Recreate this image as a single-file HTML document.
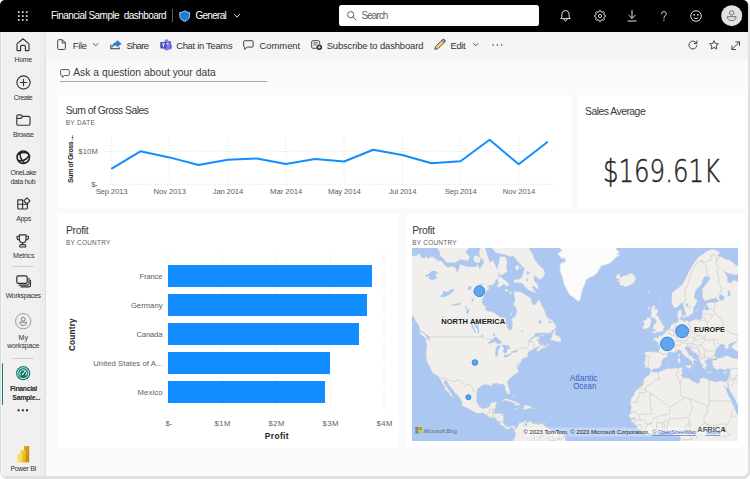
<!DOCTYPE html>
<html lang="en"><head><meta charset="utf-8"><title>Financial Sample dashboard - Power BI</title>
<style>
*{box-sizing:border-box;margin:0;padding:0}
html,body{width:750px;height:479px;overflow:hidden;background:#fff}
body{font-family:"Liberation Sans",sans-serif;color:#252423;position:relative}
.abs{position:absolute}
.ic{position:absolute;overflow:visible}
.t{position:absolute;white-space:pre;line-height:1;display:block}
#shadow{position:absolute;left:0;top:0;width:750px;height:479px;border-radius:7px;background:#dfe0e3}
#app{position:absolute;left:0;top:0;width:748px;height:475.8px;border-radius:5px;overflow:hidden;background:#fafafa}
#stage{position:absolute;left:0;top:0;width:750px;height:479px}
#top{position:absolute;left:0;top:0;width:750px;height:31.7px;background:#000}
#searchbox{position:absolute;left:338.6px;top:5.4px;width:200.3px;height:20.8px;background:#fff;border-radius:2.5px}
#nav{position:absolute;left:0;top:31.7px;width:46px;height:447.3px;background:linear-gradient(90deg,#d9dadc 0,#d9dadc .8px,#f6f6f6 1px,#f5f5f5 2.2px,#f0f0f0 2.8px,#f0f0f0 80%,#ebebeb 100%);border-right:1px solid #e0e0e0}
#toolbar{position:absolute;left:46px;top:31.7px;width:704px;height:27px;background:#f5f5f5}
#qa{position:absolute;left:60.3px;top:62px;width:206.5px;height:19.6px;border-bottom:1px solid #a8a6a4}
.card{position:absolute;background:#fff}
#c1{left:59.3px;top:94.5px;width:512.5px;height:113.2px}
#c2{left:578.7px;top:94.5px;width:166.3px;height:113.2px}
#c3{left:59.3px;top:214.4px;width:339.8px;height:233.8px}
#c4{left:405.5px;top:214.4px;width:339.5px;height:233.8px}
.bar{position:absolute;background:#118dff}
.rot{transform-origin:0 0;transform:rotate(-90deg)}
#big{position:absolute;white-space:pre;color:#252423;line-height:1}
#map{position:absolute;left:6.5px;top:34.0px;width:326px;height:192.2px;overflow:hidden;background:#a9c8ee}
</style></head><body>
<div id="shadow"></div>
<div id="app"><div id="stage">
<header id="top">
<svg class="ic" style="left:0.00px;top:0.00px" width="46.00" height="32.00" viewBox="0 0 46 32"><rect x="17.9" y="11.2" width="1.7" height="1.7" fill="#e6e6e6"/><rect x="17.9" y="15.2" width="1.7" height="1.7" fill="#e6e6e6"/><rect x="17.9" y="19.1" width="1.7" height="1.7" fill="#e6e6e6"/><rect x="21.9" y="11.2" width="1.7" height="1.7" fill="#e6e6e6"/><rect x="21.9" y="15.2" width="1.7" height="1.7" fill="#e6e6e6"/><rect x="21.9" y="19.1" width="1.7" height="1.7" fill="#e6e6e6"/><rect x="25.9" y="11.2" width="1.7" height="1.7" fill="#e6e6e6"/><rect x="25.9" y="15.2" width="1.7" height="1.7" fill="#e6e6e6"/><rect x="25.9" y="19.1" width="1.7" height="1.7" fill="#e6e6e6"/></svg>
<div class="abs" style="left:172px;top:9px;width:1px;height:13px;background:#5a5a5a"></div>
<svg class="ic" style="left:179.00px;top:10.00px" width="11.40" height="12.00" viewBox="0 0 11.4 12"><path d="M5.7 .7 C7.2 1.9 8.7 2.4 10.6 2.5 V5.6 C10.6 8.5 8.6 10.4 5.7 11.4 C2.8 10.4 .8 8.5 .8 5.6 V2.5 C2.7 2.4 4.2 1.9 5.7 .7Z" fill="#1b7cd6" stroke="#a9d3f5" stroke-width="1"/></svg>
<svg class="ic" style="left:234.20px;top:14.40px" width="6.00" height="4.20" viewBox="0 0 6 4.2"><path d="M.4 .5 L3 3.2 L5.6 .5" fill="none" stroke="#e6e6e6" stroke-width="1" stroke-linecap="round" stroke-linejoin="round"/></svg>
<span class="t" style="left:50.90px;top:11.04px;font-size:10px;color:#ffffff;letter-spacing:-0.528px;">Financial Sample  dashboard</span>
<span class="t" style="left:195.40px;top:11.04px;font-size:10px;color:#ffffff;letter-spacing:-0.696px;">General</span>
<div id="searchbox"></div>
<svg class="ic" style="left:347.00px;top:11.20px" width="9.40" height="9.40" viewBox="0 0 9.4 9.4"><circle cx="3.7" cy="3.7" r="3.1" fill="none" stroke="#605e5c" stroke-width="1"/><path d="M6 6 L8.9 8.9" stroke="#605e5c" stroke-width="1" stroke-linecap="round"/></svg>
<svg class="ic" style="left:559.50px;top:10.00px" width="11.00" height="11.60" viewBox="0 0 11 11.6"><path d="M5.5 .6 C3.2 .6 1.9 2.3 1.9 4.4 V6.8 L.8 8.6 H10.2 L9.1 6.8 V4.4 C9.1 2.3 7.8 .6 5.5 .6Z" fill="none" stroke="#e6e6e6" stroke-width="1" stroke-linejoin="round"/><path d="M4.1 9 C4.1 10.2 4.7 10.9 5.5 10.9 C6.3 10.9 6.9 10.2 6.9 9" fill="none" stroke="#e6e6e6" stroke-width="1"/></svg>
<svg class="ic" style="left:593.50px;top:9.50px" width="12.00" height="12.00" viewBox="0 0 12 12"><path d="M11.47 5.46 L11.47 6.54 L10.02 7.22 L9.70 7.98 L10.25 9.49 L9.49 10.25 L7.98 9.70 L7.22 10.02 L6.54 11.47 L5.46 11.47 L4.78 10.02 L4.02 9.70 L2.51 10.25 L1.75 9.49 L2.30 7.98 L1.98 7.22 L0.53 6.54 L0.53 5.46 L1.98 4.78 L2.30 4.02 L1.75 2.51 L2.51 1.75 L4.02 2.30 L4.78 1.98 L5.46 0.53 L6.54 0.53 L7.22 1.98 L7.98 2.30 L9.49 1.75 L10.25 2.51 L9.70 4.02 L10.02 4.78Z" fill="none" stroke="#e6e6e6" stroke-width="1" stroke-linejoin="round"/><circle cx="6" cy="6" r="1.6" fill="none" stroke="#e6e6e6" stroke-width="1"/></svg>
<svg class="ic" style="left:626.50px;top:10.30px" width="10.00" height="12.00" viewBox="0 0 10 12"><path d="M5 .5 V8.2 M1.9 5.3 L5 8.4 L8.1 5.3 M1 11 H9" fill="none" stroke="#e6e6e6" stroke-width="1" stroke-linecap="round" stroke-linejoin="round"/></svg>
<svg class="ic" style="left:659.50px;top:11.20px" width="8.00" height="10.40" viewBox="0 0 8 10.4"><path d="M1.5 2.9 C1.5 1.4 2.6 .6 3.9 .6 C5.2 .6 6.3 1.5 6.3 2.8 C6.3 4.6 3.9 4.8 3.9 6.9" fill="none" stroke="#e6e6e6" stroke-width="1" stroke-linecap="round"/><circle cx="3.9" cy="9.1" r=".7" fill="#e6e6e6"/></svg>
<svg class="ic" style="left:689.70px;top:10.00px" width="12.00" height="12.00" viewBox="0 0 12 12"><circle cx="6" cy="6" r="5.3" fill="none" stroke="#e6e6e6" stroke-width="1"/><rect x="3.5" y="4" width="1.4" height="1.6" fill="#e6e6e6"/><rect x="7.1" y="4" width="1.4" height="1.6" fill="#e6e6e6"/><path d="M4 7.9 C4.8 8.8 7.2 8.8 8 7.9" fill="none" stroke="#e6e6e6" stroke-width="1" stroke-linecap="round"/></svg>
<svg class="ic" style="left:721.30px;top:4.60px" width="21.40" height="21.40" viewBox="0 0 21.4 21.4"><circle cx="10.7" cy="10.7" r="10.5" fill="#e1e1e1"/><circle cx="10.7" cy="7.9" r="2.2" fill="none" stroke="#707070" stroke-width="1"/><path d="M6.3 11.7 H15.1 C15.1 14.2 13.4 15.6 10.7 15.6 C8 15.6 6.3 14.2 6.3 11.7Z" fill="none" stroke="#707070" stroke-width="1" stroke-linejoin="round"/></svg>
<span class="t" style="left:361.60px;top:11.23px;font-size:10px;color:#605e5c;letter-spacing:-1.017px;">Search</span>
</header>
<nav id="navitems" aria-label="Navigation pane"><div id="nav"></div>
<svg class="ic" style="left:16.00px;top:38.20px" width="14.00" height="13.60" viewBox="0 0 14 13.6"><path d="M7 .8 L1 5.9 V12 C1 12.4 1.3 12.7 1.7 12.7 H4.6 V8.6 C4.6 7.9 5.1 7.4 5.8 7.4 H8.2 C8.9 7.4 9.4 7.9 9.4 8.6 V12.7 H12.3 C12.7 12.7 13 12.4 13 12 V5.9Z" fill="none" stroke="#333333" stroke-width="1.15" stroke-linejoin="round"/></svg>
<svg class="ic" style="left:15.50px;top:74.80px" width="15.00" height="15.00" viewBox="0 0 15 15"><circle cx="7.5" cy="7.5" r="6.6" fill="none" stroke="#333333" stroke-width="1.15"/><path d="M7.5 4.3 V10.7 M4.3 7.5 H10.7" stroke="#333333" stroke-width="1.15" stroke-linecap="round"/></svg>
<svg class="ic" style="left:15.60px;top:113.60px" width="15.00" height="12.00" viewBox="0 0 15 12"><path d="M.8 2.2 C.8 1.4 1.4 .8 2.2 .8 H5 L6.6 2.4 H12.6 C13.4 2.4 14 3 14 3.8 V9.8 C14 10.6 13.4 11.2 12.6 11.2 H2.2 C1.4 11.2 .8 10.6 .8 9.8Z M.9 4.4 H4.9 L6.6 2.5" fill="none" stroke="#333333" stroke-width="1.15" stroke-linejoin="round"/></svg>
<svg class="ic" style="left:15.80px;top:150.00px" width="14.60" height="14.40" viewBox="0 0 14.6 14.4"><circle cx="7.3" cy="7.2" r="6.2" fill="none" stroke="#222" stroke-width="1.6"/><path d="M2.2 4.6 C4.5 2.2 9 1.6 12 3.6 M4.8 1.9 C3.2 5.2 4.5 9.8 8.6 12.8 M13 5.4 C11.2 9.2 7.6 11.4 2.4 10.4" fill="none" stroke="#222" stroke-width="1.5"/></svg>
<svg class="ic" style="left:16.60px;top:196.60px" width="14.00" height="13.00" viewBox="0 0 14 13"><path d="M.8 2.8 H5.6 V12 H1.8 C1.2 12 .8 11.6 .8 11 Z M5.6 7.2 H10.4 V11 C10.4 11.6 10 12 9.4 12 H5.6 M.8 7.2 H5.6" fill="none" stroke="#333333" stroke-width="1.15" stroke-linejoin="round"/><path d="M9.9 .8 L13 3.9 L9.9 7 L6.8 3.9Z" fill="none" stroke="#333333" stroke-width="1.15" stroke-linejoin="round"/></svg>
<svg class="ic" style="left:16.40px;top:234.00px" width="13.40" height="14.00" viewBox="0 0 13.4 14"><path d="M3.4 .8 H10 V5.2 C10 7.2 8.6 8.6 6.7 8.6 C4.8 8.6 3.4 7.2 3.4 5.2Z M3.4 2.2 H1 V3.4 C1 4.8 2 5.8 3.5 5.9 M10 2.2 H12.4 V3.4 C12.4 4.8 11.4 5.8 9.9 5.9 M6.7 8.6 V10.6 M4.9 10.6 H8.5 C9.1 10.6 9.6 11.1 9.6 11.7 V13 H3.8 V11.7 C3.8 11.1 4.3 10.6 4.9 10.6Z" fill="none" stroke="#333333" stroke-width="1.15" stroke-linejoin="round"/></svg>
<div class="abs" style="left:12px;top:266px;width:22px;height:1px;background:#d1d1d1"></div>
<svg class="ic" style="left:15.60px;top:274.60px" width="15.00" height="12.60" viewBox="0 0 15 12.6"><rect x=".8" y=".8" width="10.4" height="7.6" rx="1.6" fill="none" stroke="#2b2b2b" stroke-width="1.2"/><path d="M3 10.1 H11.4 C12.3 10.1 13 9.4 13 8.5 V3.2" fill="none" stroke="#2b2b2b" stroke-width="1.1" stroke-linecap="round"/><path d="M5 11.9 H12.8 C13.8 11.9 14.5 11.2 14.5 10.2 V5.2" fill="none" stroke="#2b2b2b" stroke-width="1.1" stroke-linecap="round"/></svg>
<svg class="ic" style="left:14.80px;top:312.80px" width="16.40" height="16.40" viewBox="0 0 16.4 16.4"><circle cx="8.2" cy="8.2" r="7.7" fill="#ededed" stroke="#8a8a8a" stroke-width=".8"/><circle cx="8.2" cy="6.2" r="1.9" fill="none" stroke="#777" stroke-width=".9"/><path d="M4.9 9.2 H11.5 C11.5 11.3 10.2 12.4 8.2 12.4 C6.2 12.4 4.9 11.3 4.9 9.2Z" fill="none" stroke="#777" stroke-width=".9" stroke-linejoin="round"/></svg>
<div class="abs" style="left:12px;top:358px;width:22px;height:1px;background:#d1d1d1"></div>
<div class="abs" style="left:1.6px;top:363px;width:1.6px;height:42px;background:#0f7b6c;border-radius:1px"></div>
<svg class="ic" style="left:15.80px;top:366.40px" width="14.40" height="14.40" viewBox="0 0 14.4 14.4"><circle cx="7.2" cy="7.2" r="7.1" fill="#0f7b6c"/><circle cx="7.2" cy="7.2" r="5.5" fill="none" stroke="#fff" stroke-width=".85"/><path d="M4.2 9.2 A3.5 3.5 0 1 1 10.2 9.2" fill="none" stroke="#fff" stroke-width=".85" stroke-linecap="round"/><path d="M6.7 8.3 L9.2 5.2" stroke="#fff" stroke-width="1" stroke-linecap="round"/><circle cx="6.8" cy="8.2" r=".8" fill="#fff"/></svg>
<svg class="ic" style="left:17.20px;top:408.90px" width="12.00" height="2.40" viewBox="0 0 12 2.4"><rect x="0.6" y=".2" width="2" height="2" rx=".5" fill="#222"/><rect x="4.8" y=".2" width="2" height="2" rx=".5" fill="#222"/><rect x="9" y=".2" width="2" height="2" rx=".5" fill="#222"/></svg>
<svg class="ic" style="left:17.00px;top:446.00px" width="12.20" height="16.20" viewBox="0 0 12.2 16.2"><defs><linearGradient id="pa" x1="0" y1="0" x2="1" y2="1"><stop offset="0" stop-color="#e6ad10"/><stop offset="1" stop-color="#c87e0e"/></linearGradient><linearGradient id="pb" x1="0" y1="0" x2="1" y2="1"><stop offset="0" stop-color="#f6d751"/><stop offset="1" stop-color="#e6ad10"/></linearGradient><linearGradient id="pc" x1="0" y1="0" x2="1" y2="1"><stop offset="0" stop-color="#f9e589"/><stop offset="1" stop-color="#f6d751"/></linearGradient></defs><rect x="7" y="0" width="5.2" height="16.2" rx=".6" fill="url(#pa)"/><path d="M3.5 4.6 C3.5 4.3 3.8 4 4.1 4 H8 C8.3 4 8.6 4.3 8.6 4.6 V16.2 H3.5Z" fill="url(#pb)"/><path d="M0 8.7 C0 8.4 .3 8.1 .6 8.1 H4.5 C4.8 8.1 5.1 8.4 5.1 8.7 V16.2 H.6 C.3 16.2 0 15.9 0 15.6Z" fill="url(#pc)"/></svg>
<span class="t" style="left:14.60px;top:56.07px;font-size:7.0px;color:#333333;letter-spacing:-0.362px;">Home</span>
<span class="t" style="left:13.70px;top:93.77px;font-size:7.0px;color:#333333;letter-spacing:-0.403px;">Create</span>
<span class="t" style="left:13.00px;top:131.07px;font-size:7.0px;color:#333333;letter-spacing:-0.489px;">Browse</span>
<span class="t" style="left:10.40px;top:169.07px;font-size:7.0px;color:#333333;letter-spacing:-0.404px;">OneLake</span>
<span class="t" style="left:10.40px;top:178.07px;font-size:7.0px;color:#333333;letter-spacing:-0.293px;">data hub</span>
<span class="t" style="left:16.20px;top:214.67px;font-size:7.0px;color:#333333;letter-spacing:-0.323px;">Apps</span>
<span class="t" style="left:13.00px;top:251.77px;font-size:7.0px;color:#333333;letter-spacing:-0.194px;">Metrics</span>
<span class="t" style="left:5.70px;top:291.77px;font-size:7.0px;color:#333333;letter-spacing:-0.332px;">Workspaces</span>
<span class="t" style="left:18.50px;top:334.07px;font-size:7.0px;color:#333333;letter-spacing:0.056px;">My</span>
<span class="t" style="left:7.30px;top:342.37px;font-size:7.0px;color:#333333;letter-spacing:-0.171px;">workspace</span>
<span class="t" style="left:10.00px;top:385.07px;font-size:7.0px;font-weight:700;color:#242424;letter-spacing:-0.405px;">Financial</span>
<span class="t" style="left:12.30px;top:394.37px;font-size:7.0px;font-weight:700;color:#242424;letter-spacing:-0.329px;">Sample...</span>
<span class="t" style="left:10.50px;top:465.07px;font-size:7.0px;color:#333333;letter-spacing:-0.358px;">Power BI</span>
</nav>
<div id="tbitems" role="toolbar"><div id="toolbar"></div>
<svg class="ic" style="left:57.20px;top:39.40px" width="9.20" height="11.20" viewBox="0 0 9.2 11.2"><path d="M1.6 .7 H5.3 L8.4 3.8 V9.6 C8.4 10.1 8 10.5 7.5 10.5 H1.6 C1.1 10.5 .7 10.1 .7 9.6 V1.6 C.7 1.1 1.1 .7 1.6 .7Z M5.2 .8 V3.9 H8.3" fill="none" stroke="#424242" stroke-width="1" stroke-linejoin="round"/></svg>
<svg class="ic" style="left:92.60px;top:43.40px" width="5.40" height="3.90" viewBox="0 0 5.4 3.9"><path d="M.4 .5 L2.7 2.9 L5 .5" fill="none" stroke="#424242" stroke-width="0.9" stroke-linecap="round" stroke-linejoin="round"/></svg>
<svg class="ic" style="left:109.50px;top:39.80px" width="11.80" height="9.80" viewBox="0 0 11.8 9.8"><path d="M.9 4.6 V8.7 H9.2 V7.2" fill="none" stroke="#3b3a39" stroke-width="1.1"/><path d="M6.9 .4 L11.3 3.7 L6.9 7 V5 C4.7 4.9 3.2 5.7 2.2 7.4 C2.4 4.3 4 2.5 6.9 2.3Z" fill="#2f7fd3" stroke="#1e5fa8" stroke-width=".5" stroke-linejoin="round"/></svg>
<svg class="ic" style="left:159.50px;top:39.00px" width="11.80" height="11.80" viewBox="0 0 11.8 11.8"><circle cx="9.6" cy="3.6" r="1.5" fill="#5059c9"/><circle cx="6.6" cy="2.3" r="2.1" fill="#7b83eb"/><path d="M8.3 5.2 H11 C11.4 5.2 11.7 5.5 11.7 5.9 V8.4 C11.7 9.6 10.8 10.3 9.8 10.3 C9 10.3 8.3 9.8 8.3 9Z" fill="#5059c9"/><path d="M3.6 5.2 H9.2 C9.6 5.2 9.9 5.5 9.9 5.9 V8.6 C9.9 10.3 8.5 11.6 6.8 11.6 C5 11.6 3.6 10.3 3.6 8.6Z" fill="#7b83eb"/><rect x=".2" y="3.1" width="6.4" height="6.4" rx=".7" fill="#4b53bc"/><path d="M1.9 4.9 H4.9 M3.4 4.9 V8" stroke="#fff" stroke-width=".9" fill="none"/></svg>
<svg class="ic" style="left:243.30px;top:39.60px" width="10.80" height="10.20" viewBox="0 0 10.8 10.2"><path d="M1.4 .7 H9.4 C9.8 .7 10.1 1 10.1 1.4 V6.4 C10.1 6.8 9.8 7.1 9.4 7.1 H4.2 L1.7 9.4 V7.1 H1.4 C1 7.1 .7 6.8 .7 6.4 V1.4 C.7 1 1 .7 1.4 .7Z" fill="none" stroke="#424242" stroke-width="1" stroke-linejoin="round"/></svg>
<svg class="ic" style="left:310.50px;top:39.60px" width="11.80" height="10.40" viewBox="0 0 11.8 10.4"><path d="M5.6 8.3 H1.8 C1.2 8.3 .7 7.8 .7 7.2 V1.8 C.7 1.2 1.2 .7 1.8 .7 H7.6 C8.2 .7 8.7 1.2 8.7 1.8 V4.6" fill="none" stroke="#424242" stroke-width="1"/><path d="M2.5 2.9 H6.9 M2.5 4.8 H5.4" stroke="#424242" stroke-width=".9" fill="none"/><circle cx="8.3" cy="7.2" r="2.8" fill="#2b2b2b"/><path d="M8.3 5.7 V8.7 M6.8 7.2 H9.8" stroke="#fff" stroke-width=".8"/></svg>
<svg class="ic" style="left:433.60px;top:39.20px" width="11.80" height="11.20" viewBox="0 0 11.8 11.2"><path d="M.9 10.3 L1.7 7.5 L8.3 .9 C8.9 .3 9.9 .3 10.5 .9 C11.1 1.5 11.1 2.5 10.5 3.1 L3.9 9.7Z" fill="#f3d86e" stroke="#3b3a39" stroke-width=".9" stroke-linejoin="round"/><path d="M8.3 .9 C8.9 .3 9.9 .3 10.5 .9 C11.1 1.5 11.1 2.5 10.5 3.1 L10 3.6 L7.8 1.4Z" fill="#c98bd0" stroke="#3b3a39" stroke-width=".6"/></svg>
<svg class="ic" style="left:472.60px;top:43.30px" width="5.40" height="3.90" viewBox="0 0 5.4 3.9"><path d="M.4 .5 L2.7 2.9 L5 .5" fill="none" stroke="#424242" stroke-width="0.9" stroke-linecap="round" stroke-linejoin="round"/></svg>
<svg class="ic" style="left:491.50px;top:44.00px" width="11.00" height="2.00" viewBox="0 0 11 2"><circle cx="1.2" cy="1" r=".75" fill="#333"/><circle cx="5.4" cy="1" r=".75" fill="#333"/><circle cx="9.6" cy="1" r=".75" fill="#333"/></svg>
<svg class="ic" style="left:688.20px;top:40.20px" width="10.00" height="10.00" viewBox="0 0 10 10"><path d="M8.6 3.4 A4 4 0 1 0 8.9 5.6" fill="none" stroke="#424242" stroke-width="1" stroke-linecap="round"/><path d="M8.9 .9 V3.6 H6.2" fill="none" stroke="#424242" stroke-width="1" stroke-linecap="round" stroke-linejoin="round"/></svg>
<svg class="ic" style="left:709.30px;top:40.20px" width="10.00" height="10.00" viewBox="0 0 10 10"><path d="M5.00 0.70 L6.29 3.52 L9.37 3.88 L7.09 5.98 L7.70 9.02 L5.00 7.50 L2.30 9.02 L2.91 5.98 L0.63 3.88 L3.71 3.52Z" fill="none" stroke="#424242" stroke-width="1" stroke-linejoin="round"/></svg>
<svg class="ic" style="left:731.00px;top:40.50px" width="9.40" height="9.40" viewBox="0 0 9.4 9.4"><path d="M1 8.4 L8.4 1 M4.9 .9 H8.5 V4.5 M.9 4.9 V8.5 H4.5" fill="none" stroke="#424242" stroke-width="1" stroke-linecap="round" stroke-linejoin="round"/></svg>
<span class="t" style="left:72.80px;top:41.34px;font-size:9.4px;color:#323130;letter-spacing:-0.303px;">File</span>
<span class="t" style="left:126.60px;top:41.34px;font-size:9.4px;color:#323130;letter-spacing:-0.658px;">Share</span>
<span class="t" style="left:176.20px;top:41.34px;font-size:9.4px;color:#323130;letter-spacing:-0.279px;">Chat in Teams</span>
<span class="t" style="left:259.50px;top:41.34px;font-size:9.4px;color:#323130;letter-spacing:0.010px;">Comment</span>
<span class="t" style="left:326.70px;top:41.34px;font-size:9.4px;color:#323130;letter-spacing:-0.111px;">Subscribe to dashboard</span>
<span class="t" style="left:450.60px;top:41.34px;font-size:9.4px;color:#323130;letter-spacing:-0.385px;">Edit</span>
</div>
<main id="dash">
<div id="qabox"><div id="qa"></div>
<svg class="ic" style="left:60.00px;top:68.80px" width="10.20" height="9.40" viewBox="0 0 10.2 9.4"><path d="M1.5 .6 H8.4 C8.9 .6 9.3 1 9.3 1.5 V5.6 C9.3 6.1 8.9 6.5 8.4 6.5 H4.4 L2.3 8.5 V6.5 H1.5 C1 6.5 .6 6.1 .6 5.6 V1.5 C.6 1 1 .6 1.5 .6Z" fill="none" stroke="#4a4a4a" stroke-width=".9" stroke-linejoin="round"/></svg>
<span class="t" style="left:73.20px;top:68.48px;font-size:10.3px;color:#3b3a39;letter-spacing:0.022px;">Ask a question about your data</span>
</div>
<section class="card" id="c1">
<span class="t" style="left:6.40px;top:11.80px;font-size:10.4px;color:#3b3a39;letter-spacing:-0.536px;">Sum of Gross Sales</span>
<span class="t" style="left:6.40px;top:25.28px;font-size:6.4px;color:#605e5c;letter-spacing:0.372px;">BY DATE</span>
<svg class="abs" style="left:0;top:0" width="512.4" height="112.8" viewBox="0 0 512.4 112.8"><g stroke="#d2d0ce" stroke-width=".8" stroke-dasharray=".8 2.2" fill="none"><line x1="52.3" y1="41.0" x2="52.3" y2="89.5"/><line x1="110.5" y1="41.0" x2="110.5" y2="89.5"/><line x1="168.7" y1="41.0" x2="168.7" y2="89.5"/><line x1="226.9" y1="41.0" x2="226.9" y2="89.5"/><line x1="285.1" y1="41.0" x2="285.1" y2="89.5"/><line x1="343.3" y1="41.0" x2="343.3" y2="89.5"/><line x1="401.5" y1="41.0" x2="401.5" y2="89.5"/><line x1="459.7" y1="41.0" x2="459.7" y2="89.5"/><line x1="44.7" y1="56.3" x2="496.7" y2="56.3"/><line x1="44.7" y1="89.4" x2="496.7" y2="89.4"/></g><polyline points="52.3,73.8 81.4,56.3 110.5,62.4 139.6,70.0 168.7,64.8 197.8,63.4 226.9,69.0 256.0,64.1 285.1,66.5 314.2,54.8 343.3,60.0 372.4,68.3 401.5,66.2 430.6,44.7 459.7,69.3 488.8,46.8" fill="none" stroke="#118dff" stroke-width="2" stroke-linejoin="round"/></svg>
<span class="t" style="left:36.35px;top:93.98px;font-size:7.7px;color:#605e5c;letter-spacing:-0.146px;">Sep 2013</span>
<span class="t" style="left:94.30px;top:93.98px;font-size:7.7px;color:#605e5c;letter-spacing:-0.075px;">Nov 2013</span>
<span class="t" style="left:153.50px;top:93.98px;font-size:7.7px;color:#605e5c;letter-spacing:-0.177px;">Jan 2014</span>
<span class="t" style="left:210.80px;top:93.98px;font-size:7.7px;color:#605e5c;letter-spacing:-0.041px;">Mar 2014</span>
<span class="t" style="left:268.60px;top:93.98px;font-size:7.7px;color:#605e5c;letter-spacing:-0.109px;">May 2014</span>
<span class="t" style="left:329.40px;top:93.98px;font-size:7.7px;color:#605e5c;letter-spacing:-0.183px;">Jul 2014</span>
<span class="t" style="left:385.55px;top:93.98px;font-size:7.7px;color:#605e5c;letter-spacing:-0.146px;">Sep 2014</span>
<span class="t" style="left:443.50px;top:93.98px;font-size:7.7px;color:#605e5c;letter-spacing:-0.075px;">Nov 2014</span>
<span class="t" style="left:19.00px;top:53.48px;font-size:7.7px;color:#605e5c;letter-spacing:0.122px;">$10M</span>
<span class="t" style="left:32.00px;top:86.08px;font-size:7.7px;color:#605e5c;letter-spacing:-0.544px;">$-</span>
<span class="t rot" style="left:7.77px;top:88.40px;font-size:7.0px;font-weight:700;letter-spacing:-0.379px;">Sum of Gross ...</span>
</section>
<section class="card" id="c2">
<span class="t" style="left:6.30px;top:12.10px;font-size:10.4px;color:#3b3a39;letter-spacing:-0.511px;">Sales Average</span>
<div id="big" style="left:24.7px;top:61.6px;font-size:31.5px;font-family:'DejaVu Sans Light','DejaVu Sans','Liberation Sans',sans-serif;font-weight:200;-webkit-text-stroke:.45px #252423;transform-origin:0 0;transform:scaleX(.775)">$169.61K</div>
</section>
<section class="card" id="c3">
<span class="t" style="left:6.70px;top:12.00px;font-size:10.4px;color:#3b3a39;letter-spacing:-0.313px;">Profit</span>
<span class="t" style="left:6.70px;top:25.28px;font-size:6.4px;color:#605e5c;letter-spacing:0.292px;">BY COUNTRY</span>
<svg class="abs" style="left:0;top:0" width="339.8" height="233.8" viewBox="0 0 339.8 233.8"><g stroke="#d2d0ce" stroke-width=".8" stroke-dasharray=".8 2.2" fill="none"><line x1="109.1" y1="40.1" x2="109.1" y2="196.6"/><line x1="163.1" y1="40.1" x2="163.1" y2="196.6"/><line x1="217.1" y1="40.1" x2="217.1" y2="196.6"/><line x1="271.1" y1="40.1" x2="271.1" y2="196.6"/><line x1="325.1" y1="40.1" x2="325.1" y2="196.6"/></g></svg>
<div class="bar" style="left:109.1px;top:50.5px;width:203.8px;height:21.9px"></div><div class="bar" style="left:109.1px;top:79.5px;width:198.5px;height:21.9px"></div><div class="bar" style="left:109.1px;top:108.5px;width:190.3px;height:21.9px"></div><div class="bar" style="left:109.1px;top:137.5px;width:161.7px;height:21.9px"></div><div class="bar" style="left:109.1px;top:166.5px;width:156.8px;height:21.9px"></div>
<span class="t" style="left:80.20px;top:58.48px;font-size:7.7px;color:#605e5c;letter-spacing:-0.188px;">France</span>
<span class="t" style="left:71.60px;top:87.48px;font-size:7.7px;color:#605e5c;">Germany</span>
<span class="t" style="left:77.20px;top:116.48px;font-size:7.7px;color:#605e5c;letter-spacing:-0.188px;">Canada</span>
<span class="t" style="left:33.90px;top:145.48px;font-size:7.7px;color:#605e5c;letter-spacing:0.067px;">United States of A...</span>
<span class="t" style="left:78.20px;top:174.48px;font-size:7.7px;color:#605e5c;letter-spacing:0.128px;">Mexico</span>
<span class="t" style="left:106.10px;top:205.98px;font-size:7.7px;color:#605e5c;letter-spacing:-0.044px;">$-</span>
<span class="t" style="left:155.15px;top:205.98px;font-size:7.7px;color:#605e5c;letter-spacing:0.466px;">$1M</span>
<span class="t" style="left:209.15px;top:205.98px;font-size:7.7px;color:#605e5c;letter-spacing:0.466px;">$2M</span>
<span class="t" style="left:263.15px;top:205.98px;font-size:7.7px;color:#605e5c;letter-spacing:0.466px;">$3M</span>
<span class="t" style="left:317.15px;top:205.98px;font-size:7.7px;color:#605e5c;letter-spacing:0.466px;">$4M</span>
<span class="t" style="left:205.50px;top:217.99px;font-size:8.4px;font-weight:700;letter-spacing:0.385px;">Profit</span>
<span class="t rot" style="left:9.76px;top:136.20px;font-size:8.2px;font-weight:700;letter-spacing:0.202px;">Country</span>
</section>
<section class="card" id="c4">
<span class="t" style="left:6.70px;top:12.00px;font-size:10.4px;color:#3b3a39;letter-spacing:-0.313px;">Profit</span>
<span class="t" style="left:6.70px;top:25.18px;font-size:6.4px;color:#605e5c;letter-spacing:0.292px;">BY COUNTRY</span>
<div id="map"><svg class="abs" style="left:0;top:0" width="326" height="192.2" viewBox="0 0 326 192.2" font-family="Liberation Sans, sans-serif"><rect width="326" height="193" fill="#abc7f2"/><path d="M-34.7 -24.6 L-34.7 8.3 L-17.6 9.4 L-10.0 12.6 L-6.2 10.4 L-2.4 9.9 L1.4 7.7 L5.2 7.2 L7.1 4.4 L9.0 8.8 L12.8 10.4 L13.7 7.2 L15.6 10.4 L20.4 8.3 L26.1 12.6 L29.8 13.1 L32.7 17.2 L35.5 19.3 L41.2 18.3 L44.1 20.3 L45.0 24.6 L46.4 21.7 L48.2 16.2 L52.6 17.8 L56.4 18.8 L60.2 18.8 L64.0 18.8 L65.9 15.7 L67.8 21.2 L69.1 17.8 L71.6 15.7 L71.0 11.5 L67.8 9.9 L66.8 4.4 L68.7 -0.9 L70.6 -4.5 L73.9 1.5 L75.4 7.2 L76.3 9.9 L78.2 14.2 L81.1 12.0 L83.0 16.2 L84.9 20.8 L85.8 17.8 L87.3 12.6 L87.7 8.3 L93.4 8.8 L95.3 13.6 L94.3 20.3 L95.7 23.2 L91.5 26.5 L88.7 27.5 L86.2 25.1 L86.8 29.8 L83.9 32.0 L82.0 36.5 L79.2 37.3 L75.0 37.7 L77.8 39.9 L75.4 42.0 L73.5 45.6 L71.6 48.8 L70.3 52.6 L70.4 56.4 L73.1 57.5 L74.2 62.8 L79.2 63.5 L83.0 65.3 L88.7 69.3 L93.8 70.0 L94.0 75.2 L95.3 79.3 L97.2 82.0 L99.7 81.4 L100.4 77.4 L100.0 73.6 L99.1 71.3 L102.9 68.7 L104.4 65.3 L104.8 61.8 L102.9 58.2 L101.0 56.4 L102.9 52.6 L102.3 48.8 L101.9 43.6 L106.7 43.6 L110.5 44.8 L113.3 46.8 L117.1 48.8 L119.2 51.1 L119.8 54.5 L120.9 56.8 L122.8 56.8 L124.7 54.2 L127.4 51.1 L129.4 56.4 L132.3 61.8 L134.2 67.0 L136.1 70.3 L139.9 72.0 L141.2 73.6 L143.7 76.8 L144.2 79.9 L141.8 81.7 L138.0 85.1 L134.2 85.3 L128.5 85.1 L123.7 85.3 L121.9 88.0 L119.0 90.3 L116.7 93.1 L115.2 94.8 L117.1 94.0 L120.0 90.6 L123.7 88.6 L127.5 88.9 L127.5 90.9 L124.7 91.7 L126.6 93.1 L127.0 95.9 L128.5 97.3 L132.3 97.8 L134.2 98.4 L135.3 94.5 L136.3 97.3 L133.2 99.5 L129.4 101.1 L125.6 104.0 L124.3 101.9 L127.0 99.2 L127.5 98.1 L124.7 99.5 L122.8 100.0 L121.9 101.1 L119.0 102.7 L116.7 103.7 L115.8 105.8 L115.4 106.8 L116.0 108.1 L117.1 108.6 L114.8 109.1 L112.4 109.9 L110.3 110.6 L113.3 110.4 L109.7 111.6 L109.3 113.6 L107.8 115.6 L106.7 114.4 L107.4 116.5 L105.9 119.9 L105.3 115.8 L104.8 119.0 L105.7 120.4 L106.7 124.1 L104.4 125.5 L102.1 127.1 L100.0 128.7 L97.2 131.2 L95.9 133.2 L95.5 135.4 L97.0 139.4 L98.0 143.0 L97.6 146.2 L96.1 146.6 L94.7 144.5 L93.0 140.9 L93.0 138.3 L91.1 136.1 L90.0 136.1 L87.9 136.7 L85.8 135.2 L83.0 135.4 L80.7 135.4 L80.3 138.1 L78.2 137.8 L75.8 137.0 L72.0 136.7 L70.1 137.6 L67.8 139.4 L65.5 141.3 L65.3 144.7 L64.6 148.9 L64.4 152.4 L65.5 155.6 L67.4 158.5 L69.7 159.9 L71.2 160.7 L74.4 159.9 L76.7 159.3 L78.0 157.5 L78.4 155.0 L82.0 154.0 L84.9 154.0 L83.9 157.1 L83.5 160.1 L82.4 161.1 L82.6 163.1 L81.4 165.2 L83.0 165.4 L86.8 165.2 L89.6 165.4 L91.9 167.0 L91.3 170.9 L91.3 173.8 L91.9 175.8 L93.4 177.7 L95.3 178.8 L98.1 178.3 L100.0 177.7 L101.9 178.1 L103.3 179.4 L104.2 180.6 L105.7 178.1 L106.7 175.8 L108.0 174.6 L110.5 174.2 L113.3 172.5 L114.6 172.9 L113.9 174.8 L117.1 173.8 L117.1 172.5 L119.0 174.0 L120.5 175.6 L123.7 175.6 L126.6 176.5 L128.5 175.8 L132.3 175.4 L131.3 176.7 L134.2 178.7 L135.1 179.6 L137.0 180.6 L139.3 182.7 L141.8 184.4 L145.6 184.6 L148.4 185.2 L151.3 186.9 L152.2 187.6 L153.2 190.1 L154.1 192.4 L155.0 194.9 L155.0 205.3 L94.3 205.3 L97.2 197.7 L98.1 194.9 L100.4 193.0 L102.9 189.2 L103.3 185.3 L102.1 182.1 L101.2 180.2 L99.1 178.7 L97.6 180.2 L97.4 181.9 L95.3 181.1 L92.8 180.2 L91.1 179.6 L91.1 177.9 L88.7 177.1 L87.1 176.2 L87.3 174.6 L85.2 172.5 L83.9 170.9 L83.3 170.3 L80.1 169.9 L77.3 169.2 L74.4 167.6 L71.6 165.0 L68.7 165.2 L66.5 165.6 L63.0 164.5 L60.2 163.1 L56.4 161.1 L52.6 159.1 L49.8 157.1 L50.1 154.4 L48.8 151.4 L45.0 146.8 L42.6 144.7 L41.2 141.9 L38.4 139.4 L36.1 136.1 L35.2 133.4 L32.3 132.3 L32.3 135.0 L34.6 138.3 L36.5 141.5 L38.8 144.7 L40.3 147.8 L42.2 150.7 L40.7 149.9 L37.4 146.8 L37.1 144.7 L34.6 143.0 L32.1 140.9 L33.3 139.4 L30.8 136.1 L28.9 132.8 L27.8 130.5 L25.5 127.6 L23.2 126.5 L21.1 125.8 L19.4 122.5 L18.5 120.4 L17.5 118.2 L15.1 114.1 L14.1 111.9 L14.5 107.8 L13.7 105.3 L14.7 100.0 L14.7 96.5 L13.3 90.6 L16.6 91.2 L17.5 93.1 L16.9 88.9 L15.6 87.4 L13.2 85.9 L9.9 83.6 L8.0 82.4 L7.1 78.4 L5.2 75.2 L2.7 72.0 L2.3 68.7 L0.4 69.3 L-0.5 66.0 L-2.4 62.5 L-4.3 59.3 L-7.1 58.2 L-10.0 56.4 L-15.7 52.6 L-34.7 52.6Z M6.5 83.6 L10.9 85.1 L13.2 87.1 L15.6 89.4 L15.8 90.6 L13.7 90.3 L10.9 88.3 L7.5 85.6Z M-2.4 73.0 L-0.1 73.6 L0.8 78.4 L-1.5 76.8Z M28.0 7.7 L31.7 11.0 L34.6 14.7 L43.1 14.7 L48.8 11.5 L56.4 13.1 L57.7 8.3 L53.6 4.4 L58.3 -1.5 L56.4 -10.8 L41.2 -14.1 L26.1 -7.6 L24.2 -1.5 L27.0 3.2Z M11.8 -4.5 L16.6 0.9 L21.3 -1.5 L24.2 -17.5 L12.8 -21.0Z M61.1 12.0 L64.0 14.7 L67.8 14.7 L69.1 10.4 L65.9 7.7 L62.1 7.7Z M55.5 -3.3 L62.1 -0.3 L66.8 -7.6 L64.0 -17.5 L56.4 -14.1Z M133.2 24.6 L131.3 29.3 L127.5 32.0 L122.8 27.5 L121.9 32.0 L125.6 36.5 L127.0 40.7 L124.7 40.7 L121.9 38.2 L120.0 39.0 L124.7 45.2 L120.9 44.0 L115.2 41.5 L110.5 35.6 L106.7 34.7 L101.9 35.2 L101.4 32.0 L108.6 30.7 L110.5 26.5 L112.4 20.3 L108.6 16.7 L104.8 12.6 L101.0 7.7 L98.1 8.8 L94.3 7.2 L88.7 6.0 L83.0 4.4 L80.1 0.3 L79.2 -10.8 L88.7 -17.5 L101.9 -14.1 L113.3 -4.5 L120.0 4.4 L122.8 11.5 L127.5 17.8 L131.3 20.8Z M102.7 19.8 L105.2 16.7 L107.2 18.8 L106.9 21.7 L104.2 22.2Z M107.6 18.3 L109.5 18.8 L109.0 20.8Z M102.9 10.4 L104.8 11.0 L103.8 12.6Z M84.9 30.7 L87.7 27.9 L90.6 30.2 L95.3 34.3 L97.8 37.7 L94.3 38.2 L91.9 36.0 L87.7 39.4 L84.5 38.2 L86.8 35.2Z M92.1 41.1 L94.7 41.1 L97.6 44.0 L93.4 43.6Z M97.8 43.2 L99.7 44.0 L99.1 46.4 L97.6 45.6Z M98.1 64.9 L100.0 65.6 L99.7 67.7 L98.1 67.3Z M94.3 76.2 L97.2 76.8 L95.9 77.7Z M137.6 92.3 L139.5 90.0 L140.6 85.3 L142.5 82.0 L144.0 82.4 L142.9 85.9 L144.0 87.1 L147.1 88.0 L148.4 90.3 L149.4 92.9 L148.4 94.8 L146.7 93.4 L144.6 94.3 L143.3 92.9 L140.8 92.6Z M127.7 86.2 L131.3 87.1 L132.9 88.6 L129.4 88.0Z M127.9 95.1 L130.4 96.2 L132.3 96.2 L130.8 97.3 L128.5 96.2Z M88.8 153.2 L92.1 151.1 L95.3 150.7 L99.1 152.0 L102.9 153.4 L106.3 155.0 L109.1 156.7 L106.7 157.3 L102.5 157.5 L103.5 155.8 L101.0 155.0 L98.1 153.6 L94.7 152.6 L91.5 152.8Z M108.8 160.3 L111.4 160.7 L113.9 161.7 L116.2 160.5 L120.1 160.5 L119.4 159.1 L117.3 157.7 L113.9 157.3 L110.8 157.3 L112.2 159.1 L111.8 160.1Z M101.4 160.3 L104.0 160.3 L105.3 161.3 L102.9 161.5Z M122.4 160.1 L125.3 160.3 L124.9 161.1 L122.4 161.1Z M132.5 175.2 L134.2 175.2 L134.2 176.5 L132.5 176.5Z M101.4 146.4 L102.5 146.6 L102.7 148.9 L101.4 148.3Z M203.6 29.8 L204.8 26.5 L207.2 25.6 L209.1 29.8 L211.4 27.5 L214.8 27.0 L219.0 25.1 L222.0 26.5 L224.1 31.1 L221.8 35.2 L217.7 37.3 L213.9 39.0 L210.1 37.3 L207.0 36.9 L208.2 34.7 L204.4 32.5 L208.2 32.0Z M230.9 81.1 L233.8 81.1 L237.8 79.3 L238.5 75.8 L239.5 72.3 L237.9 69.7 L235.7 69.3 L233.8 72.0 L230.9 73.0 L232.3 75.8 L230.4 79.3Z M239.3 85.6 L243.1 85.1 L246.1 84.2 L250.5 83.6 L252.6 82.4 L251.0 81.4 L253.1 78.0 L250.3 76.8 L250.1 74.9 L247.6 71.7 L246.7 68.3 L244.2 67.0 L246.1 63.5 L246.3 61.4 L242.3 61.1 L243.8 57.8 L240.4 57.8 L238.9 61.8 L239.5 66.0 L238.5 68.0 L240.6 70.3 L243.3 70.7 L244.2 73.6 L244.0 75.8 L241.4 75.8 L241.9 78.7 L240.0 80.2 L243.3 81.7 L244.2 82.4 L241.7 82.7Z M232.4 104.8 L234.7 103.4 L239.5 103.7 L243.3 104.0 L246.5 104.2 L247.4 101.3 L247.8 98.4 L245.7 95.1 L245.2 93.7 L241.4 92.0 L241.0 90.3 L244.2 89.4 L246.9 89.7 L246.5 86.8 L247.6 87.7 L250.3 87.4 L252.7 85.3 L253.1 83.3 L256.0 81.7 L258.1 79.9 L259.0 76.8 L261.3 75.5 L263.6 74.6 L266.2 73.9 L266.2 70.3 L265.3 67.0 L265.5 63.5 L268.3 61.8 L270.0 61.1 L269.4 65.3 L270.6 66.3 L268.9 69.3 L268.3 71.0 L270.4 72.6 L272.7 73.0 L275.5 72.0 L277.0 73.9 L281.2 72.0 L285.0 71.0 L287.3 72.3 L289.7 70.7 L289.9 67.0 L290.7 62.5 L292.6 61.1 L296.0 62.8 L296.4 58.9 L294.5 57.5 L294.5 55.6 L298.3 54.2 L303.0 54.5 L307.2 53.0 L304.0 50.3 L299.2 51.1 L293.5 53.0 L290.7 50.3 L290.3 45.6 L290.3 40.7 L293.5 36.5 L297.3 32.0 L297.9 29.3 L292.6 28.4 L290.7 32.0 L289.7 36.5 L285.9 39.9 L283.1 44.0 L282.5 48.8 L283.1 50.7 L285.6 52.6 L284.0 56.4 L281.6 60.0 L281.2 64.2 L279.9 66.6 L277.0 67.3 L276.8 69.0 L274.6 69.0 L273.6 66.3 L272.3 61.8 L271.1 57.1 L270.0 54.5 L267.9 56.4 L265.1 59.7 L262.2 59.7 L260.3 56.8 L259.6 52.6 L259.4 48.8 L260.1 44.8 L263.2 42.0 L267.4 39.0 L270.4 36.5 L272.3 32.5 L274.6 28.4 L276.5 24.2 L278.7 20.3 L280.6 16.7 L283.3 13.1 L286.5 8.8 L290.3 6.6 L294.5 3.2 L298.7 1.5 L303.0 1.5 L307.8 4.4 L305.9 7.7 L309.7 8.8 L313.4 11.0 L318.2 12.0 L322.9 16.2 L327.7 19.8 L327.7 24.6 L323.9 27.0 L318.2 26.1 L313.4 24.2 L311.6 22.7 L315.3 27.9 L315.9 34.3 L320.1 34.7 L321.0 31.6 L325.8 33.8 L326.7 28.4 L331.5 25.6 L344.8 27.5 L344.8 205.3 L268.5 205.3 L267.5 194.9 L268.1 192.0 L268.5 189.5 L267.9 188.2 L266.0 187.1 L263.2 187.6 L261.3 187.6 L259.4 184.8 L258.2 183.8 L254.6 183.8 L252.2 184.2 L249.9 185.0 L246.1 186.7 L243.8 186.1 L240.4 185.9 L235.7 187.4 L232.8 186.3 L229.4 183.6 L228.1 182.7 L226.2 181.5 L224.9 179.6 L224.7 178.1 L223.3 176.9 L221.4 175.0 L218.4 172.1 L218.0 170.1 L216.7 167.6 L218.6 165.0 L219.0 161.1 L219.2 158.1 L217.7 155.0 L219.5 149.9 L221.6 147.4 L222.6 144.3 L225.2 141.1 L228.5 138.9 L230.9 137.0 L231.5 134.8 L231.3 132.8 L232.4 130.3 L234.7 128.5 L237.0 126.9 L238.7 123.0 L239.8 122.7 L241.4 124.4 L244.2 124.1 L246.1 124.6 L248.0 123.2 L250.1 122.7 L252.7 121.3 L255.6 120.6 L259.4 120.6 L263.2 120.1 L267.0 120.1 L268.9 119.4 L270.4 119.9 L270.8 120.4 L269.8 121.6 L270.0 123.7 L271.0 124.8 L269.1 126.5 L269.4 127.8 L271.1 129.0 L273.6 129.9 L276.5 130.3 L278.9 131.0 L279.3 132.8 L283.1 134.1 L285.9 135.4 L287.8 133.9 L288.0 130.8 L290.7 129.6 L293.5 130.3 L297.3 131.9 L301.1 133.0 L304.9 134.1 L307.8 132.8 L310.6 133.0 L311.7 133.9 L314.0 133.7 L315.0 133.0 L316.1 130.5 L316.5 128.7 L317.4 126.5 L318.2 123.0 L318.6 121.1 L317.2 121.1 L315.5 120.6 L313.4 122.3 L310.6 121.3 L307.9 120.6 L305.9 122.0 L303.0 120.9 L301.7 120.1 L301.9 118.5 L299.8 117.0 L300.9 115.1 L299.6 114.1 L299.8 112.9 L302.1 111.9 L304.9 111.9 L304.9 110.4 L305.3 109.9 L309.7 109.9 L313.4 107.8 L316.3 107.8 L319.1 109.6 L322.9 110.6 L325.8 110.4 L328.8 109.1 L328.6 106.6 L325.8 104.0 L322.9 101.9 L321.0 100.8 L319.7 99.2 L317.2 99.2 L316.3 100.5 L313.8 101.6 L313.4 100.0 L311.7 98.9 L313.4 97.3 L310.6 96.5 L308.3 95.9 L306.2 99.2 L304.3 101.3 L303.4 104.2 L302.3 106.3 L303.2 108.1 L304.5 109.9 L303.4 110.4 L301.1 110.6 L299.6 112.1 L299.2 110.9 L296.4 110.6 L295.0 112.1 L294.1 112.4 L293.0 111.9 L293.3 114.6 L294.1 115.8 L295.4 117.3 L295.4 118.5 L293.9 118.0 L293.7 119.4 L293.7 121.3 L292.4 121.3 L291.1 120.6 L289.9 118.2 L291.3 117.0 L289.7 116.5 L288.4 114.6 L286.9 112.1 L286.9 108.9 L285.9 107.3 L283.1 105.3 L280.3 103.7 L278.4 101.3 L277.4 99.2 L275.9 99.7 L275.7 98.1 L273.2 99.2 L273.4 101.6 L275.7 103.7 L276.8 106.8 L278.9 108.1 L280.4 108.1 L280.3 109.4 L283.1 110.9 L285.0 112.6 L284.6 113.4 L282.1 111.6 L281.4 113.4 L282.3 115.3 L281.2 115.8 L280.4 117.8 L279.7 118.0 L280.1 116.3 L280.4 114.6 L279.5 112.9 L278.4 112.4 L277.2 111.1 L275.9 109.9 L273.6 109.1 L272.1 107.3 L269.8 105.5 L269.2 102.9 L266.6 101.6 L265.1 102.9 L263.9 103.4 L262.2 105.0 L259.4 104.2 L257.5 104.0 L255.8 105.0 L256.0 107.1 L256.0 108.1 L253.7 109.6 L251.4 110.6 L249.9 113.1 L249.3 114.4 L250.3 116.1 L248.8 117.5 L248.6 118.7 L246.5 120.1 L245.5 120.6 L241.6 120.9 L239.8 122.3 L238.5 122.0 L237.8 120.4 L235.9 119.7 L233.0 120.1 L233.2 116.8 L231.9 116.1 L233.0 112.9 L233.4 109.1 L233.0 107.1Z M273.4 117.8 L275.5 117.3 L279.5 117.0 L278.7 119.7 L278.5 120.9 L277.0 120.4 L273.8 118.7Z M265.5 110.6 L267.4 109.9 L268.5 111.6 L268.1 114.8 L267.0 115.3 L265.8 115.1 L266.0 112.1Z M266.2 106.8 L267.7 105.3 L267.9 107.8 L267.4 109.4 L266.4 108.6Z M294.5 123.7 L297.3 123.9 L299.8 124.1 L299.6 124.8 L296.8 125.1 L294.5 124.4Z M311.2 124.8 L312.5 123.9 L315.5 123.2 L314.4 124.8 L312.5 125.8Z M254.5 113.9 L256.0 113.1 L256.3 114.1 L255.6 114.6Z M270.8 68.0 L273.6 66.6 L273.8 68.7 L273.0 70.3 L271.1 69.7Z M268.5 68.7 L270.2 68.7 L270.4 70.0 L268.9 70.0Z M284.4 62.5 L285.9 60.4 L285.6 62.5 L284.6 63.9Z M281.0 66.3 L282.3 62.5 L281.4 66.0Z M291.4 58.9 L293.9 57.8 L293.2 59.7 L291.6 60.0Z M235.7 43.6 L237.8 43.6 L237.2 46.8Z M246.9 50.7 L248.2 50.3 L247.6 53.0Z M236.1 58.9 L238.1 58.6 L237.0 61.1 L235.9 62.8Z M217.8 139.8 L219.2 139.4 L218.6 140.4Z M219.9 140.2 L220.7 140.2 L220.5 140.9Z M222.8 139.4 L223.7 138.9 L223.3 140.2Z" fill="#f0efeb" stroke="#c6cbd6" stroke-width=".5" stroke-linejoin="round"/><path d="M166.6 53.0 L163.6 51.5 L161.7 49.2 L157.9 47.2 L156.0 44.0 L154.5 40.7 L151.8 35.6 L150.7 29.8 L148.0 22.7 L148.4 15.7 L153.2 13.6 L153.2 9.9 L149.4 10.4 L145.9 5.5 L150.3 2.6 L146.5 -0.9 L143.7 -10.8 L139.9 -32.2 L212.0 -32.2 L209.1 -7.6 L208.2 -1.5 L203.4 0.3 L207.2 4.4 L204.4 6.6 L207.6 6.6 L203.4 9.9 L197.7 15.2 L193.0 16.7 L189.2 17.8 L185.4 24.6 L181.6 27.9 L177.8 29.3 L174.0 32.0 L172.7 36.5 L170.6 40.7 L169.1 46.8 L168.3 51.5Z" fill="#fbfbfa" stroke="#dfe3ea" stroke-width=".8" stroke-linejoin="round"/><path d="M311.6 136.1 L311.7 137.6 L312.9 139.8 L314.0 141.5 L315.3 144.7 L317.2 148.9 L319.7 153.0 L320.5 156.1 L322.9 160.7 L324.6 165.4 L327.7 168.0 L331.5 171.3 L332.0 169.9 L330.9 167.0 L330.5 164.1 L328.6 161.1 L327.1 158.1 L324.5 155.0 L323.5 151.4 L321.0 147.8 L319.1 144.3 L316.9 140.4 L316.3 137.2 L315.9 137.4 L315.0 140.6 L313.8 139.8 L312.5 137.8Z M316.3 98.4 L319.1 98.9 L322.0 95.9 L324.3 94.3 L321.0 94.3 L318.2 95.4 L316.3 96.7Z M12.8 27.5 L15.6 26.5 L19.4 23.2 L23.2 22.7 L26.4 25.6 L23.2 26.5 L25.1 30.2 L20.4 32.0 L16.6 31.1 L17.9 27.9 L14.7 28.9Z M28.0 48.8 L31.7 49.2 L34.6 48.0 L37.4 46.8 L41.2 43.2 L43.1 41.5 L39.3 41.1 L36.5 43.6 L33.6 43.6 L30.8 42.8 L31.2 45.6 L28.9 47.2Z M38.8 57.8 L41.2 56.4 L45.0 55.6 L49.2 54.9 L47.9 56.4 L43.1 57.5Z M54.5 65.6 L56.4 65.6 L57.4 62.5 L56.4 60.0 L54.9 61.4Z M62.5 74.2 L64.8 74.2 L66.1 78.0 L67.2 82.4 L67.0 84.8 L65.9 84.8 L65.5 81.4 L63.4 79.0 L62.1 76.2Z M59.1 76.2 L60.6 76.8 L61.7 79.9 L63.4 83.0 L64.0 85.1 L62.9 84.8 L61.1 81.1 L59.4 78.7Z M75.4 95.4 L78.2 95.6 L81.1 94.8 L83.0 93.4 L83.9 94.8 L85.8 95.9 L88.7 95.6 L89.6 95.9 L89.0 93.1 L87.1 91.7 L85.8 89.7 L82.6 89.1 L80.5 91.7 L78.2 92.9Z M83.2 105.3 L83.7 108.6 L85.1 108.6 L86.2 105.8 L86.0 102.7 L87.9 99.5 L88.8 97.8 L87.5 97.3 L85.2 98.1 L83.3 100.5 L83.9 102.1Z M89.2 97.6 L91.5 99.2 L91.7 101.9 L90.7 103.4 L93.2 105.3 L94.9 104.0 L95.7 100.5 L98.1 101.3 L98.5 100.0 L96.6 97.6 L94.3 97.0 L91.5 96.7Z M91.7 108.6 L93.4 109.4 L96.2 108.6 L100.0 106.0 L99.7 105.5 L97.2 106.3 L94.3 107.3 L92.4 107.3Z M98.5 104.5 L101.0 104.5 L103.8 104.5 L105.3 103.7 L105.0 102.1 L102.9 102.7 L100.0 103.2Z M81.1 87.7 L83.0 87.7 L82.6 85.1 L81.1 85.3Z M114.3 26.5 L117.1 26.5 L117.5 23.7 L115.2 23.2Z M114.3 32.9 L116.2 33.4 L116.0 30.7 L114.5 30.7Z M55.5 41.5 L59.3 41.5 L59.3 38.2 L56.4 38.6Z M66.8 36.5 L71.6 35.6 L70.6 36.9 L67.8 37.3Z M29.8 69.3 L32.7 69.3 L32.3 68.3 L29.8 68.3Z M59.3 54.2 L61.1 53.4 L61.7 50.3 L60.2 50.7Z M53.0 60.7 L54.9 60.0 L54.5 57.8 L53.2 58.6Z M59.3 76.5 L61.1 76.2 L60.2 75.2Z M69.3 88.9 L71.2 88.9 L71.0 86.8 L69.7 87.1Z M307.8 52.6 L311.6 51.9 L312.5 48.8 L308.7 46.0 L306.8 48.8Z M315.3 48.8 L318.2 48.0 L318.2 44.0 L315.7 42.4 L316.3 46.0Z M273.4 58.2 L275.5 58.2 L276.5 55.6 L274.6 55.3Z M276.8 60.7 L277.8 60.0 L278.2 57.5 L277.4 58.2Z M126.6 75.2 L129.4 74.9 L128.9 72.3 L127.0 72.6Z M109.5 84.5 L110.8 83.6 L110.5 82.0 L109.1 83.0Z M135.5 74.6 L138.9 74.9 L139.9 73.6 L137.0 73.3Z M86.9 173.1 L88.3 173.1 L89.0 174.6 L87.5 174.4Z M113.5 175.0 L114.8 175.2 L115.2 177.5 L113.7 178.3 L112.9 176.7Z" fill="#abc7f2"/><path d="M16.2 88.9 L69.3 88.9 L70.4 89.7 L74.4 90.6 L80.1 91.7 L82.2 90.9 M93.4 99.2 L93.6 105.3 L92.3 107.3 M100.0 104.8 L104.8 102.4 L107.6 100.0 L114.3 100.0 L115.6 98.9 L117.1 95.9 L118.6 93.4 L120.3 93.7 L121.3 94.3 L121.3 97.8 L122.0 99.5 M27.8 130.5 L32.3 130.1 L39.3 133.2 L44.6 133.2 L44.6 132.1 L47.9 132.1 L50.9 134.8 L51.7 137.0 L54.1 138.3 L55.5 136.5 L57.5 136.5 L60.2 140.0 L61.5 143.0 L65.3 144.9 M75.0 168.0 L75.0 166.4 L75.9 165.0 L78.2 164.8 L77.3 162.7 L77.3 161.5 L80.7 161.5 L80.7 165.2 L81.3 165.2 M80.7 161.5 L82.4 160.3 M79.0 169.4 L80.3 168.2 L80.7 167.0 L81.3 165.2 M80.3 168.2 L82.0 169.0 L83.3 170.1 M84.3 170.9 L85.4 169.4 L87.1 169.2 L89.0 167.4 L91.9 167.0 M87.3 174.6 L88.8 174.8 L91.1 175.0 M92.4 180.0 L92.6 178.5 L93.2 177.7 M103.1 179.4 L103.5 180.8 L102.1 182.1 M114.6 173.3 L112.6 174.6 L111.4 177.9 L112.6 179.8 L113.3 182.5 L117.1 182.5 L121.9 184.0 L121.3 187.3 L122.8 193.5 M136.1 179.6 L133.6 181.5 L134.8 182.9 L133.4 184.6 L134.8 185.9 L136.1 186.3 L136.5 187.6 L137.0 188.4 L136.1 190.7 L138.0 193.3 M134.8 185.9 L130.8 188.2 L127.5 188.0 L128.5 191.1 L125.6 194.1 L122.8 193.5 M141.4 184.6 L141.2 186.3 L139.9 188.2 L141.2 189.5 L142.7 192.2 M147.5 184.8 L146.7 186.3 L147.5 189.2 L146.3 191.4 M151.8 188.2 L150.1 191.1 L146.3 191.4 L142.7 192.2 L138.0 193.3 M100.4 193.1 L102.5 194.3 L106.5 195.8 L107.2 196.0 M271.7 56.4 L273.6 51.5 L273.0 46.8 L273.2 40.7 L276.5 35.6 L277.4 29.8 L279.3 25.1 L281.2 19.8 L284.0 15.7 L288.4 12.6 M288.4 12.6 L290.7 14.2 L294.5 18.3 L294.9 25.1 L295.6 28.4 M288.4 12.6 L293.5 14.2 L298.7 12.0 L299.2 7.2 L303.0 6.6 L304.9 11.0 L304.5 12.6 M308.3 8.8 L304.9 11.0 L304.5 12.6 L304.9 17.8 L306.8 20.3 L305.3 23.7 L306.8 29.8 L306.4 33.8 L307.8 36.5 L309.7 40.7 L308.7 43.6 L304.9 48.8 L302.6 50.7 M233.2 108.1 L234.5 108.1 L237.6 108.1 L238.1 109.1 L236.8 110.4 L236.8 112.4 L236.6 113.6 L235.7 113.9 L236.6 115.3 L236.2 117.3 L235.7 119.0 L235.9 119.7 M246.5 104.2 L249.9 106.0 L252.7 106.6 L256.0 106.8 M254.6 82.7 L257.9 85.9 L260.9 87.4 L262.0 87.4 L265.5 88.9 L264.3 92.9 L261.5 96.7 L263.2 97.6 L262.8 99.7 L263.2 102.1 L264.1 103.2 M256.3 81.7 L259.4 81.7 L261.1 83.0 L261.5 83.9 L261.3 80.5 L263.2 79.0 L263.6 75.8 M261.5 83.9 L261.7 85.6 L262.0 87.4 M266.2 70.7 L268.7 71.0 M276.8 73.9 L277.6 78.4 L278.2 83.0 L273.2 85.1 L276.1 89.4 L274.6 92.6 L268.9 93.1 L268.1 93.1 L266.0 92.6 L264.3 92.9 M261.5 96.7 L263.2 97.6 L266.0 96.7 L267.0 97.6 L269.6 95.6 L268.1 94.3 L268.1 93.1 M269.6 95.6 L273.0 94.5 L275.9 95.9 L280.3 95.1 L280.4 94.5 L282.3 91.7 L282.1 90.0 L278.4 88.9 L276.1 89.4 M278.2 83.0 L281.2 84.8 L285.6 87.4 L292.6 88.6 L295.4 84.5 L294.7 79.9 L295.2 73.9 L293.2 72.3 L287.3 72.3 M289.9 66.6 L297.1 65.6 L300.4 68.0 M296.0 60.4 L301.9 61.8 M303.4 54.9 L301.9 61.8 L303.4 66.3 L300.4 68.0 L298.8 70.7 L295.2 73.9 M293.2 72.3 L293.2 70.3 L290.1 69.3 M303.4 66.3 L308.7 70.3 L311.9 75.2 L309.7 79.6 L307.9 82.0 L301.1 81.1 L294.7 81.1 M309.7 79.6 L315.2 82.4 L318.2 85.1 L325.8 87.1 L326.0 90.3 L325.4 92.3 L322.4 94.3 M292.6 88.6 L292.0 90.6 L297.1 92.6 L300.4 90.9 L303.4 98.6 L306.2 99.5 M300.4 90.9 L304.9 91.7 L306.8 96.2 M282.3 91.7 L285.6 92.3 L288.8 90.3 L292.0 90.6 M282.1 90.0 L285.6 87.4 M280.4 94.8 L281.4 95.9 L285.6 97.6 L288.4 96.7 L290.1 96.2 L293.3 91.7 M293.0 102.1 L298.3 103.4 L301.1 102.4 L304.2 103.4 M288.4 96.7 L290.7 99.7 L293.0 102.1 L292.4 105.8 L292.4 107.1 L293.3 109.6 M275.9 95.9 L275.7 98.4 M275.7 98.6 L278.9 98.6 L281.4 95.9 M279.9 99.5 L280.4 101.9 L283.3 105.3 L285.0 106.6 M279.9 99.5 L285.9 100.0 L286.7 101.9 L286.3 104.0 L285.0 106.6 M286.7 101.9 L288.4 105.8 L286.7 108.1 M288.4 105.8 L290.9 107.3 L292.4 107.1 M287.8 113.6 L289.7 110.6 L293.3 109.6 L297.3 109.6 L300.0 108.6 L303.0 107.8 M300.0 108.6 L299.2 110.9 M286.7 108.1 L288.8 108.1 L289.7 110.6 M318.2 122.5 L319.5 120.6 L322.0 120.6 L325.8 120.4 L330.3 119.7 M317.4 125.8 L319.1 126.7 L318.0 128.7 M316.5 129.2 L318.0 128.7 L317.4 130.1 L319.7 131.0 L323.9 131.0 L323.5 128.5 L327.7 126.2 L330.3 119.7 M315.0 133.2 L316.1 137.2 M317.4 130.1 L317.2 132.8 L316.3 137.2 M316.3 137.4 L318.4 137.8 L321.0 136.1 L322.0 135.0 L320.1 132.8 L323.9 131.0 L326.5 131.9 M297.3 132.6 L297.3 153.0 L319.9 153.0 M271.7 129.0 L269.4 132.3 L267.9 135.7 L268.9 142.6 L268.9 147.8 L272.7 149.9 L278.4 150.9 L295.4 158.1 L295.4 157.1 L297.3 157.1 L297.3 153.0 M266.2 120.4 L265.5 124.8 L264.1 127.1 L267.0 131.7 L267.9 135.7 M245.7 124.6 L246.7 128.3 L247.6 131.0 L243.3 132.3 L240.4 135.0 L233.4 138.9 L233.4 141.1 M225.2 141.1 L233.4 141.1 L233.4 144.7 L227.1 144.7 L227.1 149.9 L225.2 150.9 L225.2 154.4 L217.7 154.4 M233.4 141.9 L240.8 146.8 L252.2 154.8 L256.2 157.5 L257.9 158.9 L261.3 157.5 L264.1 155.2 L272.7 149.9 M240.8 146.8 L237.6 146.8 L239.5 164.1 L239.5 166.0 L231.9 166.2 L228.1 165.8 L226.8 167.4 M218.6 165.0 L222.4 163.9 L224.3 164.8 L226.8 167.4 L228.3 172.1 L228.1 172.9 M257.9 158.9 L257.9 164.1 L256.5 166.2 L251.8 167.0 L250.3 167.0 L246.1 168.6 L242.3 170.1 L239.5 173.1 L239.5 176.0 L238.1 175.6 L234.7 176.3 L234.2 174.8 L232.8 172.1 L228.3 172.1 M278.4 150.9 L279.3 155.0 L280.3 157.1 L279.3 163.3 L275.7 169.6 L268.9 170.3 L263.2 170.9 L257.5 169.9 L256.7 173.4 L255.2 178.7 L255.0 183.6 M295.4 158.1 L295.4 165.6 L293.3 166.0 L291.6 171.7 L293.3 174.8 L294.7 176.7 L301.1 177.5 L306.8 176.7 L312.5 175.8 L314.4 177.7 M319.1 168.4 L318.2 171.5 L316.3 174.8 L314.4 177.7 L312.5 181.0 L316.3 185.5 L318.0 187.1 M319.9 153.0 L320.5 155.0 M319.1 168.4 L320.1 163.1 L322.9 161.1 M319.1 168.4 L322.9 168.2 L325.8 168.0 L330.3 171.9 M266.2 186.9 L267.9 183.4 L271.7 182.9 L274.6 177.7 L277.4 173.8 L276.8 172.1 L275.7 169.6 M277.4 173.8 L279.3 176.7 L276.5 177.1 L278.7 181.5 L277.4 184.4 L277.8 187.1 L280.3 191.6 L275.1 191.6 L271.3 191.6 L271.3 193.9 L268.5 193.9 M278.7 181.5 L285.0 180.6 L293.3 174.8 M294.7 176.7 L296.4 179.2 L301.9 186.3 L297.3 186.3 L292.6 188.0 L286.9 186.1 L285.2 189.2 L284.0 191.1 M301.9 186.3 L306.8 187.4 L308.7 189.0 L314.4 187.8 L318.0 187.1 M256.7 173.4 L254.3 172.5 L251.6 174.8 L249.7 174.6 L244.6 174.8 L244.6 177.7 L244.8 181.5 L243.8 186.1 M251.6 174.8 L252.9 178.7 L252.9 183.3 L252.2 184.2 M249.9 174.8 L250.8 179.6 L251.0 182.9 L252.2 184.2 M239.5 176.0 L235.7 176.2 L234.3 178.7 L233.8 181.3 L235.7 184.4 L235.7 187.4 M233.8 181.3 L232.1 181.5 L230.4 179.6 L228.1 182.7 M230.4 179.6 L229.6 178.1 L228.7 176.7 L226.2 176.9 L224.7 178.5 M221.4 175.0 L223.9 173.4 L223.9 171.9 L220.5 171.7 L218.2 172.1 M218.0 170.7 L221.4 169.6 L223.7 170.1 L221.4 170.5 L218.0 170.7 M223.9 171.9 L228.3 172.1" fill="none" stroke="#c2c2c0" stroke-width=".55" stroke-linejoin="round"/><circle cx="67.4" cy="43.2" r="5.4" fill="#589ff0" fill-opacity=".95" stroke="#2a7de0" stroke-width=".9"/><circle cx="62.9" cy="114.5" r="2.8" fill="#589ff0" fill-opacity=".95" stroke="#2a7de0" stroke-width=".9"/><circle cx="56.4" cy="149.2" r="2.5" fill="#589ff0" fill-opacity=".95" stroke="#2a7de0" stroke-width=".9"/><circle cx="255.3" cy="95.9" r="6.8" fill="#589ff0" fill-opacity=".95" stroke="#2a7de0" stroke-width=".9"/><circle cx="270.1" cy="83.2" r="6.5" fill="#589ff0" fill-opacity=".95" stroke="#2a7de0" stroke-width=".9"/><text x="29.2" y="75.6" font-size="7.6" font-weight="700" fill="#1a1a1a" textLength="64.0" lengthAdjust="spacingAndGlyphs" stroke="#fff" stroke-width="1.6" stroke-opacity=".3" paint-order="stroke" stroke-linejoin="round">NORTH AMERICA</text><text x="282.0" y="83.9" font-size="7.6" font-weight="700" fill="#1a1a1a" textLength="31.0" lengthAdjust="spacingAndGlyphs" stroke="#fff" stroke-width="1.6" stroke-opacity=".3" paint-order="stroke" stroke-linejoin="round">EUROPE</text><text x="285.2" y="184.5" font-size="7.6" font-weight="700" fill="#1a1a1a" textLength="28.5" lengthAdjust="spacingAndGlyphs" stroke="#fff" stroke-width="1.6" stroke-opacity=".3" paint-order="stroke" stroke-linejoin="round">AFRICA</text><text x="157.8" y="132.8" font-size="9.4" font-weight="400" fill="#3b60c2" textLength="27.8" lengthAdjust="spacingAndGlyphs" >Atlantic</text><text x="161.3" y="141.5" font-size="9.4" font-weight="400" fill="#3b60c2" textLength="23.0" lengthAdjust="spacingAndGlyphs" >Ocean</text><g transform="translate(3.3 179.0)"><rect width="3" height="3" fill="#f25022"/><rect x="3.5" width="3" height="3" fill="#7fba00"/><rect y="3.5" width="3" height="3" fill="#00a4ef"/><rect x="3.5" y="3.5" width="3" height="3" fill="#ffb900"/></g><text x="11.8" y="184.6" font-size="6.2" font-weight="400" fill="#666" textLength="33.0" lengthAdjust="spacingAndGlyphs" >Microsoft Bing</text><rect x="111.0" y="179.6" width="200" height="9" fill="#fff" fill-opacity=".3"/><text x="111.6" y="186.4" font-size="5.9" font-weight="400" fill="#222" textLength="126.0" lengthAdjust="spacingAndGlyphs" >© 2023 TomTom, © 2023 Microsoft Corporation,</text><text x="240.2" y="186.4" font-size="5.9" font-weight="400" fill="#3a5fb8" textLength="44.2" lengthAdjust="spacingAndGlyphs" text-decoration="underline">© OpenStreetMap</text><text x="293.6" y="186.4" font-size="5.9" font-weight="400" fill="#3a5fb8" textLength="14.8" lengthAdjust="spacingAndGlyphs" text-decoration="underline">Terms</text></svg></div>
</section>
</main>
</div></div>
</body></html>
